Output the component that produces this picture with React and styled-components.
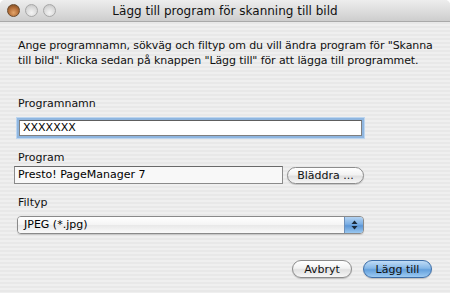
import React from 'react';
import styled, { createGlobalStyle } from 'styled-components';

const GlobalStyle = createGlobalStyle`
  html, body {
    margin: 0;
    padding: 0;
    background: #ffffff;
  }
  body {
    font-family: "DejaVu Sans", "Liberation Sans", sans-serif;
    color: #000;
  }
`;

const Window = styled.div`
  width: 450px;
  height: 293px;
  border-radius: 5px 5px 0 0;
  overflow: hidden;
  display: flex;
  flex-direction: column;
  background: repeating-linear-gradient(
    to bottom,
    #efefef 0px,
    #efefef 2px,
    #e8e8e8 2px,
    #e8e8e8 4px
  );
`;

const TitleBar = styled.div`
  position: relative;
  height: 21px;
  flex-shrink: 0;
  display: flex;
  align-items: center;
  justify-content: center;
  background: linear-gradient(to bottom, #ededed 0%, #dcdcdc 55%, #cdcdcd 100%);
  border-bottom: 1px solid #a9a9a9;
`;

const Lights = styled.div`
  position: absolute;
  left: 7px;
  top: 4px;
  display: flex;
  gap: 5px;
`;

const Light = styled.span`
  width: 13px;
  height: 13px;
  border-radius: 50%;
  box-sizing: border-box;
  border: 1px solid ${p => (p.$active ? '#6b4a2c' : '#a7a7a7')};
  background: ${p =>
    p.$active
      ? 'radial-gradient(circle at 50% 70%, #e4a56a 0%, #b06a35 55%, #6e4420 100%)'
      : 'radial-gradient(circle at 50% 70%, #f4f4f4 0%, #d8d8d8 60%, #bdbdbd 100%)'};
`;

const Title = styled.div`
  font-size: 12px;
  color: #111;
`;

const Body = styled.div`
  flex: 1;
  padding: 16px 18px 0 18px;
  display: flex;
  flex-direction: column;
`;

const Intro = styled.p`
  margin: 0;
  font-size: 11px;
  line-height: 15px;
  letter-spacing: -0.1px;
  white-space: nowrap;
  color: #111;
`;

const Label = styled.div`
  font-size: 11px;
  line-height: 14px;
  color: #111;
  margin-top: ${p => p.$top}px;
  margin-bottom: ${p => p.$bottom}px;
`;

const FocusField = styled.div`
  width: 338px;
  height: 14px;
  margin-left: 1px;
  background: #fff;
  border: 1px solid #7f7f7f;
  border-top-color: #5e5e5e;
  box-shadow: 0 0 0 2px #8fb6e0, 0 0 0 3px #bcd5ef;
  font-size: 11px;
  line-height: 14px;
  padding-left: 3px;
  color: #000;
`;

const Row = styled.div`
  display: flex;
  align-items: center;
  gap: 4px;
`;

const PlainField = styled.div`
  width: 264px;
  height: 16px;
  margin-left: -4px;
  background: #f8f8f8;
  border: 1px solid #8a8a8a;
  border-top-color: #6a6a6a;
  font-size: 11px;
  line-height: 16px;
  padding-left: 3px;
`;

const PillButton = styled.button`
  height: ${p => p.$h || 18}px;
  width: ${p => p.$w}px;
  padding: 0;
  border-radius: 9px;
  font-family: inherit;
  font-size: 11px;
  color: #111;
  border: 1px solid ${p => (p.$primary ? '#3d6ea8' : '#8c8c8c')};
  background: ${p =>
    p.$primary
      ? 'linear-gradient(to bottom, #c0dcf6 0%, #86b8e8 45%, #64a0dc 55%, #9ccaf2 100%)'
      : 'linear-gradient(to bottom, #ffffff 0%, #f2f2f2 45%, #e0e0e0 55%, #f6f6f6 100%)'};
  box-shadow: 0 1px 1px rgba(0, 0, 0, 0.18);
`;

const Select = styled.div`
  margin-left: -1px;
  width: 345px;
  height: 16px;
  display: flex;
  border: 1px solid #8a8a8a;
  border-radius: 4px;
  overflow: hidden;
  box-shadow: 0 1px 1px rgba(0, 0, 0, 0.15);
`;

const SelectValue = styled.div`
  flex: 1;
  background: linear-gradient(to bottom, #ffffff 0%, #f4f4f4 50%, #e8e8e8 51%, #fafafa 100%);
  font-size: 11px;
  line-height: 16px;
  padding-left: 6px;
`;

const SelectArrows = styled.div`
  width: 18px;
  display: flex;
  align-items: center;
  justify-content: center;
  border-left: 1px solid #6d8fb8;
  background: linear-gradient(to bottom, #b4d3f2 0%, #7aaee4 45%, #5c96d6 55%, #9ac8f0 100%);
`;

const Footer = styled.div`
  display: flex;
  justify-content: flex-end;
  gap: 11px;
  margin-top: 26px;
`;

export default function App() {
  return (
    <>
      <GlobalStyle />
      <Window>
        <TitleBar>
          <Lights>
            <Light $active />
            <Light />
            <Light />
          </Lights>
          <Title>Lägg till program för skanning till bild</Title>
        </TitleBar>
        <Body>
          <Intro>
            Ange programnamn, sökväg och filtyp om du vill ändra program för "Skanna
            <br />
            till bild". Klicka sedan på knappen "Lägg till" för att lägga till programmet.
          </Intro>
          <Label $top={29} $bottom={9}>Programnamn</Label>
          <FocusField>XXXXXXX</FocusField>
          <Label $top={15} $bottom={1}>Program</Label>
          <Row>
            <PlainField>Presto! PageManager 7</PlainField>
            <PillButton $w={77} $h={17}>Bläddra ...</PillButton>
          </Row>
          <Label $top={12} $bottom={6}>Filtyp</Label>
          <Select>
            <SelectValue>JPEG (*.jpg)</SelectValue>
            <SelectArrows>
              <svg width="7" height="10" viewBox="0 0 7 10">
                <path d="M3.5 0.5 L6.5 4 L0.5 4 Z" fill="#1b2a3a" />
                <path d="M3.5 9.5 L6.5 6 L0.5 6 Z" fill="#1b2a3a" />
              </svg>
            </SelectArrows>
          </Select>
          <Footer>
            <PillButton $w={60}>Avbryt</PillButton>
            <PillButton $w={69} $primary>Lägg till</PillButton>
          </Footer>
        </Body>
      </Window>
    </>
  );
}
